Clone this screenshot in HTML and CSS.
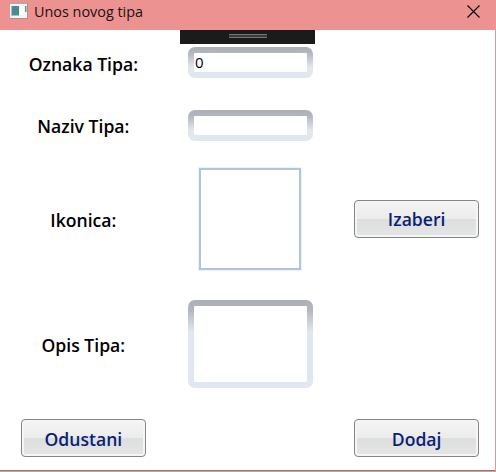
FILE: index.html
```
<!DOCTYPE html>
<html lang="sr-Latn">
<head>
<meta charset="utf-8">
<title>Unos novog tipa</title>
<link rel="stylesheet" href="styles.css">
</head>
<body>
<div class="window">
  <header class="titlebar">
    <svg class="app-icon" width="20" height="18" viewBox="0 0 20 18">
      <defs><linearGradient id="g" x2="1" y2="1"><stop stop-color="#4a80b4"/><stop offset="1" stop-color="#479565"/></linearGradient></defs>
      <rect x="1" y="1" width="18" height="16" fill="#b98a8c"/>
      <rect x="1" y="1" width="17" height="15" fill="#f4f5f5"/>
      <rect x="1" y="1" width="17" height="1" fill="#a9a9ae"/>
      <rect x="2" y="4" width="8" height="10" fill="#9dc3cb"/>
      <rect x="3" y="4" width="7" height="9" fill="url(#g)"/>
      <rect x="11" y="4" width="4" height="9" fill="#fff"/>
      <rect x="16" y="4" width="1.5" height="6" fill="#55a07c"/>
    </svg>
    <span class="title">Unos novog tipa</span>
    <svg class="close" width="13" height="13" viewBox="0 0 13 13"><path d="M.5.5l12 12M12.5.5l-12 12"/></svg>
  </header>
  <main class="form">
    <div class="grip"><i></i></div>
    <label class="label first">Oznaka Tipa:</label>
    <div class="field short"><div class="inner">0</div></div>
    <span></span>
    <label class="label">Naziv Tipa:</label>
    <div class="field short"><div class="inner"></div></div>
    <span></span>
    <label class="label">Ikonica:</label>
    <div class="picture"></div>
    <button class="button">Izaberi</button>
    <label class="label">Opis Tipa:</label>
    <div class="field tall"><div class="inner"></div></div>
    <span></span>
    <button class="button">Odustani</button>
    <span></span>
    <button class="button">Dodaj</button>
  </main>
</div>
</body>
</html>
```
FILE: styles.css
```
* { box-sizing: border-box; }
body { margin: 0; overflow: hidden; font-family: "Open Sans", "Noto Sans", sans-serif; }
.window {
  width: 496px; height: 472px; background: #fff;
  border-right: 1px solid #ec9392; border-bottom: 1px solid #ec9392;
  display: flex; flex-direction: column;
}
.titlebar {
  height: 30px; flex: none; width: 496px; background: #ec9392;
  display: flex; align-items: flex-start; padding: 2px 16px 0 9px;
}
.title { font-size: 14.4px; line-height: 20px; margin-left: 5px; color: #1a1010; white-space: nowrap; }
.close { margin: 3px 0 0 auto; }
.close path { stroke: #000; stroke-width: 1.1; fill: none; }
.form {
  position: relative; flex: 1; overflow: hidden;
  border-bottom: 1px solid #808080;
  display: grid; align-items: center; justify-items: center;
  grid-template-columns: repeat(3, 166.66px);
  grid-template-rows: 64.5px 61.5px 125.5px 125px 63px;
}
.grip {
  position: absolute; top: 0; left: 180px; width: 135px; height: 14px;
  background: #1b1b1b; display: flex; justify-content: center; padding-top: 4px;
}
.grip i { width: 38px; height: 4px; border-top: 1px solid #737373; border-bottom: 1px solid #737373; background: #3a3a3a; margin-left: 1px; }
.label { font-size: 17.6px; font-weight: 600; line-height: 24px; white-space: nowrap; color: #000; padding-top: 2px; }
.first { padding-top: 4px; }
.field {
  width: 125px; padding: 6px; border-radius: 7px;
  background: linear-gradient(#acb0b6, #b4b8be 20%, #e1e7ee 65%);
  margin-left: 1px;
}
.short { height: 31px; }
.tall { height: 88px; background: linear-gradient(#acafb5, #b4b8be 12%, #e1e7ee 36%); }
.inner { height: 100%; background: #fff; border-radius: 1px; font-size: 15px; line-height: 19px; padding-left: 1px; }
.picture { width: 102px; height: 102px; border: 2px solid #afc4df; outline: 1px solid #eef3f9; background: #fff; }
.button {
  width: 125px; height: 38px; border: 1px solid #858585; border-radius: 4px; padding: 1px 0 0;
  background: linear-gradient(#f4f4f4, #ececec 50%, #dddfdf 50%, #e4e5e5);
  box-shadow: inset 0 0 0 2px #f5f5f5;
  font: 600 17.6px/24px "Open Sans", "Noto Sans", sans-serif; color: #0b1f75;
}
```
